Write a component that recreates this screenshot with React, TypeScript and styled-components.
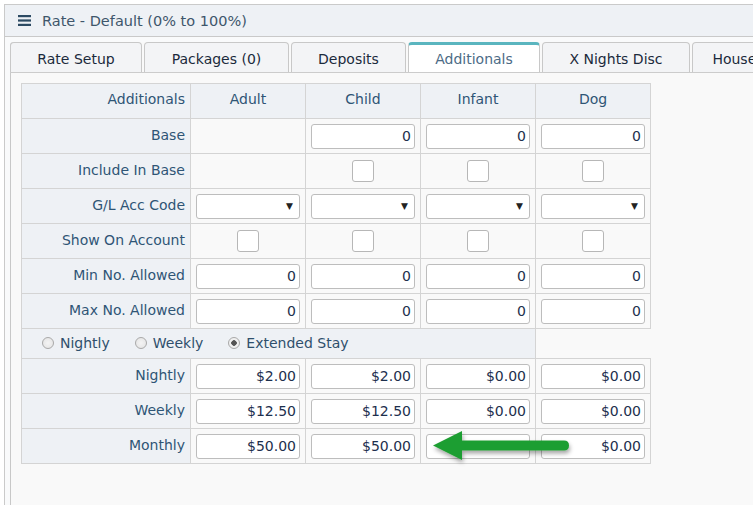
import styled, { createGlobalStyle } from "styled-components";

const GlobalStyle = createGlobalStyle`
  html, body {
    margin: 0;
    padding: 0;
    background: #fff;
    overflow: hidden;
  }
  body {
    font-family: "DejaVu Sans", Verdana, sans-serif;
    font-size: 14px;
    color: #2f4f6c;
  }
`;

const Panel = styled.div`
  margin: 4px 0 0 4px;
  width: 820px;
  height: 540px;
  border: 1px solid #cacaca;
  background: #f9fafb;
`;

const PanelHeader = styled.div`
  height: 31px;
  display: flex;
  align-items: center;
  gap: 11px;
  padding-left: 13px;
  background: #eef1f5;
  border-bottom: 1px solid #c9c9c9;
  font-size: 14.5px;
  color: #3e566b;
`;

const PanelBody = styled.div`
  padding: 5px 0 0 5px;
`;

const TabContainer = styled.div`
  border-left: 1px solid #c8c8c8;
  border-top-left-radius: 4px;
  background: #f9f9f9;
  height: 470px;
`;

const TabStrip = styled.div`
  display: flex;
  gap: 2px;
  height: 30px;
  margin-left: -1px;
  border-bottom: 1px solid #cccccc;
`;

const Tab = styled.div<{ $w: number; $active?: boolean }>`
  flex: none;
  width: ${(p) => p.$w}px;
  box-sizing: border-box;
  display: flex;
  align-items: center;
  justify-content: center;
  white-space: nowrap;
  border: 1px solid #c8c8c8;
  border-bottom: none;
  border-top: ${(p) => (p.$active ? "3px solid #5ab5bf" : "1px solid #c8c8c8")};
  border-radius: 4px 4px 0 0;
  background: ${(p) => (p.$active ? "#ffffff" : "#f3f4f6")};
  color: ${(p) => (p.$active ? "#4c6b86" : "#1b2a3c")};
  padding-top: ${(p) => (p.$active ? "0" : "2px")};
`;

const Content = styled.div`
  position: relative;
  padding: 10px 0 0 10px;
`;

const Grid = styled.table`
  border-collapse: collapse;
  table-layout: fixed;
`;

const Row = styled.tr<{ $h?: number }>`
  height: ${(p) => p.$h ?? 35}px;
`;

const HeadCell = styled.td<{ $w: number }>`
  width: ${(p) => p.$w}px;
  box-sizing: border-box;
  padding: 7px 6px 0;
  border: 1px solid #d4d4d4;
  background: #eef1f5;
  color: #2f5575;
  text-align: center;
  vertical-align: top;
`;

const LabelCell = styled.td<{ $head?: boolean; $w?: number }>`
  width: ${(p) => (p.$w ? `${p.$w}px` : "auto")};
  box-sizing: border-box;
  padding: 0 5px 0 6px;
  border: 1px solid #d4d4d4;
  background: #eef1f5;
  color: #2f5575;
  text-align: right;
  white-space: nowrap;
  vertical-align: ${(p) => (p.$head ? "top" : "middle")};
  padding-top: ${(p) => (p.$head ? "7px" : "0")};
  padding-bottom: ${(p) => (p.$head ? "0" : "3px")};
`;

const Cell = styled.td`
  box-sizing: border-box;
  padding: 0 5px;
  border: 1px solid #d4d4d4;
  background: #f9f9f9;
  text-align: center;
  vertical-align: middle;
`;

const RadioCell = styled.td`
  border: 1px solid #d4d4d4;
  background: #eef1f5;
  padding: 0 0 2px 20px;
`;

const NumInput = styled.div`
  width: 104px;
  height: 25px;
  box-sizing: border-box;
  border: 1px solid #bdbdbd;
  border-radius: 3px;
  background: #fff;
  display: flex;
  align-items: center;
  justify-content: flex-end;
  padding-right: 3px;
  color: #1d2f4d;
`;

const SelectBox = styled(NumInput)`
  padding-right: 6px;
  font-size: 9px;
  color: #222;
`;

const Check = styled.span`
  display: inline-block;
  width: 22px;
  height: 22px;
  box-sizing: border-box;
  border: 1px solid #b7b7b7;
  border-radius: 3px;
  background: #fff;
  vertical-align: middle;
`;

const RadioGroup = styled.div`
  display: flex;
  align-items: center;
  gap: 25px;
  color: #2f4f6c;
`;

const RadioItem = styled.label`
  display: flex;
  align-items: center;
  gap: 6px;
`;

const RadioDot = styled.span<{ $on?: boolean }>`
  width: 12px;
  height: 12px;
  box-sizing: border-box;
  border-radius: 50%;
  border: 1px solid #a9a9a9;
  background: radial-gradient(circle, ${(p) => (p.$on ? "#555 0 2.5px, #f0f0f0 3px" : "#f4f4f4 0, #e2e2e2 100%")});
`;

const Arrow = styled.svg`
  position: absolute;
  left: 422px;
  top: 358px;
  overflow: visible;
`;

const Hamburger = () => (
  <svg width="13" height="11" viewBox="0 0 13 11">
    <rect x="0" y="0" width="13" height="2.2" fill="#2c4a63" />
    <rect x="0" y="4.4" width="13" height="2.2" fill="#2c4a63" />
    <rect x="0" y="8.8" width="13" height="2.2" fill="#2c4a63" />
  </svg>
);

const tabs = [
  { label: "Rate Setup", w: 132 },
  { label: "Packages (0)", w: 145 },
  { label: "Deposits", w: 115 },
  { label: "Additionals", w: 132, active: true },
  { label: "X Nights Disc", w: 148 },
  { label: "Housekeeping", w: 140 },
];

const cols = ["Adult", "Child", "Infant", "Dog"];

const zeroRow = ["0", "0", "0", "0"];

const rateRows = [
  { label: "Nightly", vals: ["$2.00", "$2.00", "$0.00", "$0.00"] },
  { label: "Weekly", vals: ["$12.50", "$12.50", "$0.00", "$0.00"] },
  { label: "Monthly", vals: ["$50.00", "$50.00", "", "$0.00"] },
];

export default function App() {
  return (
    <>
      <GlobalStyle />
      <Panel>
        <PanelHeader>
          <Hamburger />
          <span>Rate - Default (0% to 100%)</span>
        </PanelHeader>
        <PanelBody>
          <TabContainer>
            <TabStrip>
              {tabs.map((t) => (
                <Tab key={t.label} $w={t.w} $active={t.active}>
                  {t.label}
                </Tab>
              ))}
            </TabStrip>
            <Content>
              <Grid>
                <tbody>
                  <Row>
                    <LabelCell $head $w={169}>
                      Additionals
                    </LabelCell>
                    {cols.map((c) => (
                      <HeadCell key={c} $w={115}>
                        {c}
                      </HeadCell>
                    ))}
                  </Row>
                  <Row>
                    <LabelCell>Base</LabelCell>
                    <Cell />
                    {zeroRow.slice(1).map((v, i) => (
                      <Cell key={i}>
                        <NumInput>{v}</NumInput>
                      </Cell>
                    ))}
                  </Row>
                  <Row>
                    <LabelCell>Include In Base</LabelCell>
                    <Cell />
                    {[1, 2, 3].map((i) => (
                      <Cell key={i}>
                        <Check />
                      </Cell>
                    ))}
                  </Row>
                  <Row>
                    <LabelCell>G/L Acc Code</LabelCell>
                    {cols.map((c) => (
                      <Cell key={c}>
                        <SelectBox>▼</SelectBox>
                      </Cell>
                    ))}
                  </Row>
                  <Row>
                    <LabelCell>Show On Account</LabelCell>
                    {cols.map((c) => (
                      <Cell key={c}>
                        <Check />
                      </Cell>
                    ))}
                  </Row>
                  <Row>
                    <LabelCell>Min No. Allowed</LabelCell>
                    {zeroRow.map((v, i) => (
                      <Cell key={i}>
                        <NumInput>{v}</NumInput>
                      </Cell>
                    ))}
                  </Row>
                  <Row>
                    <LabelCell>Max No. Allowed</LabelCell>
                    {zeroRow.map((v, i) => (
                      <Cell key={i}>
                        <NumInput>{v}</NumInput>
                      </Cell>
                    ))}
                  </Row>
                  <Row $h={30}>
                    <RadioCell colSpan={4}>
                      <RadioGroup>
                        <RadioItem>
                          <RadioDot />
                          Nightly
                        </RadioItem>
                        <RadioItem>
                          <RadioDot />
                          Weekly
                        </RadioItem>
                        <RadioItem>
                          <RadioDot $on />
                          Extended Stay
                        </RadioItem>
                      </RadioGroup>
                    </RadioCell>
                  </Row>
                  {rateRows.map((r) => (
                    <Row key={r.label}>
                      <LabelCell>{r.label}</LabelCell>
                      {r.vals.map((v, i) => (
                        <Cell key={i}>
                          <NumInput>{v}</NumInput>
                        </Cell>
                      ))}
                    </Row>
                  ))}
                </tbody>
              </Grid>
              <Arrow width="140" height="30" viewBox="0 0 140 30">
                <defs>
                  <filter id="sh" x="-10%" y="-30%" width="130%" height="180%">
                    <feDropShadow dx="1" dy="3" stdDeviation="2" floodColor="#000" floodOpacity="0.35" />
                  </filter>
                </defs>
                <g filter="url(#sh)">
                  <path d="M0 14.5 L29 0 L29 9.5 L131 9.5 Q136 9.5 136 14.5 Q136 19.5 131 19.5 L29 19.5 L29 29 Z" fill="#1f9e31" />
                </g>
              </Arrow>
            </Content>
          </TabContainer>
        </PanelBody>
      </Panel>
    </>
  );
}
